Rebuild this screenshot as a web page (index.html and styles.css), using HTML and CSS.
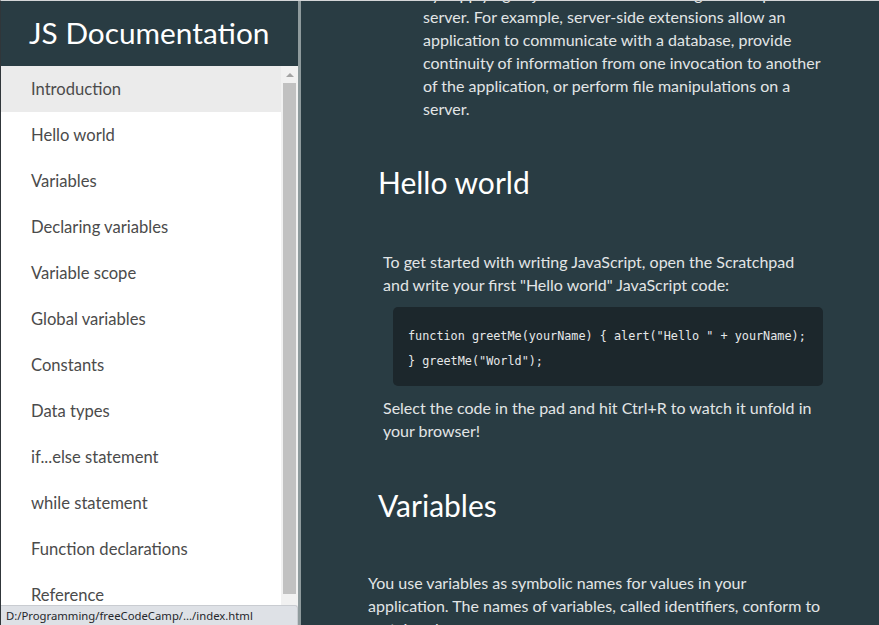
FILE: index.html
```html
<!DOCTYPE html>
<html lang="en">
<head>
<meta charset="utf-8">
<title>JS Documentation</title>
<link rel="stylesheet" href="styles.css">
</head>
<body>
<div class="page">
  <nav id="navbar" class="sidebar">
    <header class="nav-title">JS Documentation</header>
    <div class="nav-body">
      <ul class="nav-list">
        <li><a class="nav-link active" href="#Introduction">Introduction</a></li>
        <li><a class="nav-link" href="#Hello_world">Hello world</a></li>
        <li><a class="nav-link" href="#Variables">Variables</a></li>
        <li><a class="nav-link" href="#Declaring_variables">Declaring variables</a></li>
        <li><a class="nav-link" href="#Variable_scope">Variable scope</a></li>
        <li><a class="nav-link" href="#Global_variables">Global variables</a></li>
        <li><a class="nav-link" href="#Constants">Constants</a></li>
        <li><a class="nav-link" href="#Data_types">Data types</a></li>
        <li><a class="nav-link" href="#if...else_statement">if...else statement</a></li>
        <li><a class="nav-link" href="#while_statement">while statement</a></li>
        <li><a class="nav-link" href="#Function_declarations">Function declarations</a></li>
        <li><a class="nav-link" href="#Reference">Reference</a></li>
      </ul>
      <div class="scrollbar">
        <div class="sb-btn"><span class="tri-up"></span></div>
        <div class="sb-thumb"></div>
        <div class="sb-space"></div>
        <div class="sb-btn sb-btn-down"><span class="tri-down"></span></div>
      </div>
    </div>
  </nav>
  <div class="divider"></div>
  <main id="main-doc" class="main-doc">
    <div class="doc-inner">
      <section class="main-section" id="Introduction">
        <ul class="intro-list">
          <li>Server-side JavaScript extends the core language<br>by supplying objects relevant to running JavaScript on a<br>server. For example, server-side extensions allow an<br>application to communicate with a database, provide<br>continuity of information from one invocation to another<br>of the application, or perform file manipulations on a<br>server.</li>
        </ul>
      </section>
      <section class="main-section" id="Hello_world">
        <header class="sec-title">Hello world</header>
        <p class="hello-text">To get started with writing JavaScript, open the Scratchpad<br>and write your first "Hello world" JavaScript code:</p>
        <pre class="code">function greetMe(yourName) { alert("Hello " + yourName);
} greetMe("World");</pre>
        <p class="hello-text after-code">Select the code in the pad and hit Ctrl+R to watch it unfold in<br>your browser!</p>
      </section>
      <section class="main-section" id="Variables">
        <header class="sec-title">Variables</header>
        <p class="var-text">You use variables as symbolic names for values in your<br>application. The names of variables, called identifiers, conform to<br>certain rules.</p>
      </section>
    </div>
  </main>
  <div class="status-bubble">D:/Programming/freeCodeCamp/.../index.html</div>
</div>
</body>
</html>
```
FILE: styles.css
```css
* { box-sizing: border-box; }

html, body {
  margin: 0;
  height: 100%;
}

body {
  font-family: Lato, "Open Sans", sans-serif;
  background: #293c43;
  overflow: hidden;
}

.page {
  position: relative;
  height: 100vh;
  display: flex;
  border-top: 1px solid #d4d6d8;
  border-left: 1px solid #30363a;
}

/* ---------- sidebar ---------- */
.sidebar {
  width: 297px;
  flex: none;
  display: flex;
  flex-direction: column;
  background: #ffffff;
}

.nav-title {
  height: 65px;
  flex: none;
  display: flex;
  align-items: center;
  padding: 0 0 3px 28px;
  background: #293c43;
  color: #ffffff;
  font-size: 29.8px;
}

.nav-body {
  flex: 1;
  min-height: 0;
  display: flex;
}

.nav-list {
  flex: 1;
  list-style: none;
  margin: 0;
  padding: 0;
  overflow: hidden;
}

.nav-link {
  display: flex;
  align-items: center;
  height: 46px;
  padding-left: 30px;
  color: #4b4b4b;
  font-size: 16.6px;
  text-decoration: none;
}

.nav-link.active {
  background: #ebebeb;
}

/* fake scrollbar */
.scrollbar {
  width: 17px;
  flex: none;
  display: flex;
  flex-direction: column;
  background: #f1f1f1;
}

.sb-btn {
  height: 17px;
  flex: none;
  display: flex;
  align-items: center;
  justify-content: center;
}

.tri-up {
  width: 0;
  height: 0;
  border-left: 4px solid transparent;
  border-right: 4px solid transparent;
  border-bottom: 4px solid #a3a3a3;
}

.tri-down {
  width: 0;
  height: 0;
  border-left: 4px solid transparent;
  border-right: 4px solid transparent;
  border-top: 4px solid #505050;
}

.sb-thumb {
  height: 511px;
  flex: none;
  margin: 0 2px;
  background: #c1c1c1;
}

.sb-space { flex: 1; }

.divider {
  width: 3px;
  flex: none;
  background: #8f9b9d;
}

/* ---------- main ---------- */
.main-doc {
  flex: 1;
  min-width: 0;
  overflow: hidden;
  padding-left: 67px;
  color: #e2e5e6;
  font-size: 16px;
  line-height: 23px;
}

.doc-inner {
  margin-top: -42px;
  width: 490px;
}

.intro-list {
  list-style: none;
  margin: 0;
  padding: 0 0 0 55px;
}

.sec-title {
  margin: 44px 0 0 10px;
  font-size: 30px;
  line-height: 36px;
  color: #ffffff;
}

.hello-text {
  margin: 50px 0 0 15px;
}

.hello-text.after-code {
  margin-top: 10px;
}

.code {
  margin: 11px 0 0 25px;
  width: 430px;
  padding: 17px 0 12px 15px;
  background: #1c272c;
  border-radius: 5px;
  color: #e6e8e9;
  font-family: "DejaVu Sans Mono", "Liberation Mono", monospace;
  font-size: 11.8px;
  line-height: 25px;
  white-space: pre;
}

#Variables .sec-title {
  margin-top: 45px;
}

.var-text {
  margin: 48px 0 0 0;
}

/* ---------- browser status bubble ---------- */
.status-bubble {
  position: absolute;
  left: 0;
  bottom: 0;
  width: 297px;
  height: 20px;
  padding-left: 5px;
  display: flex;
  align-items: center;
  background: #dee1e6;
  border-top: 1px solid #c9ccd1;
  border-right: 1px solid #c9ccd1;
  border-top-right-radius: 3px;
  color: #25282c;
  font-family: "Noto Sans", "Open Sans", sans-serif;
  font-size: 11.3px;
}
```
